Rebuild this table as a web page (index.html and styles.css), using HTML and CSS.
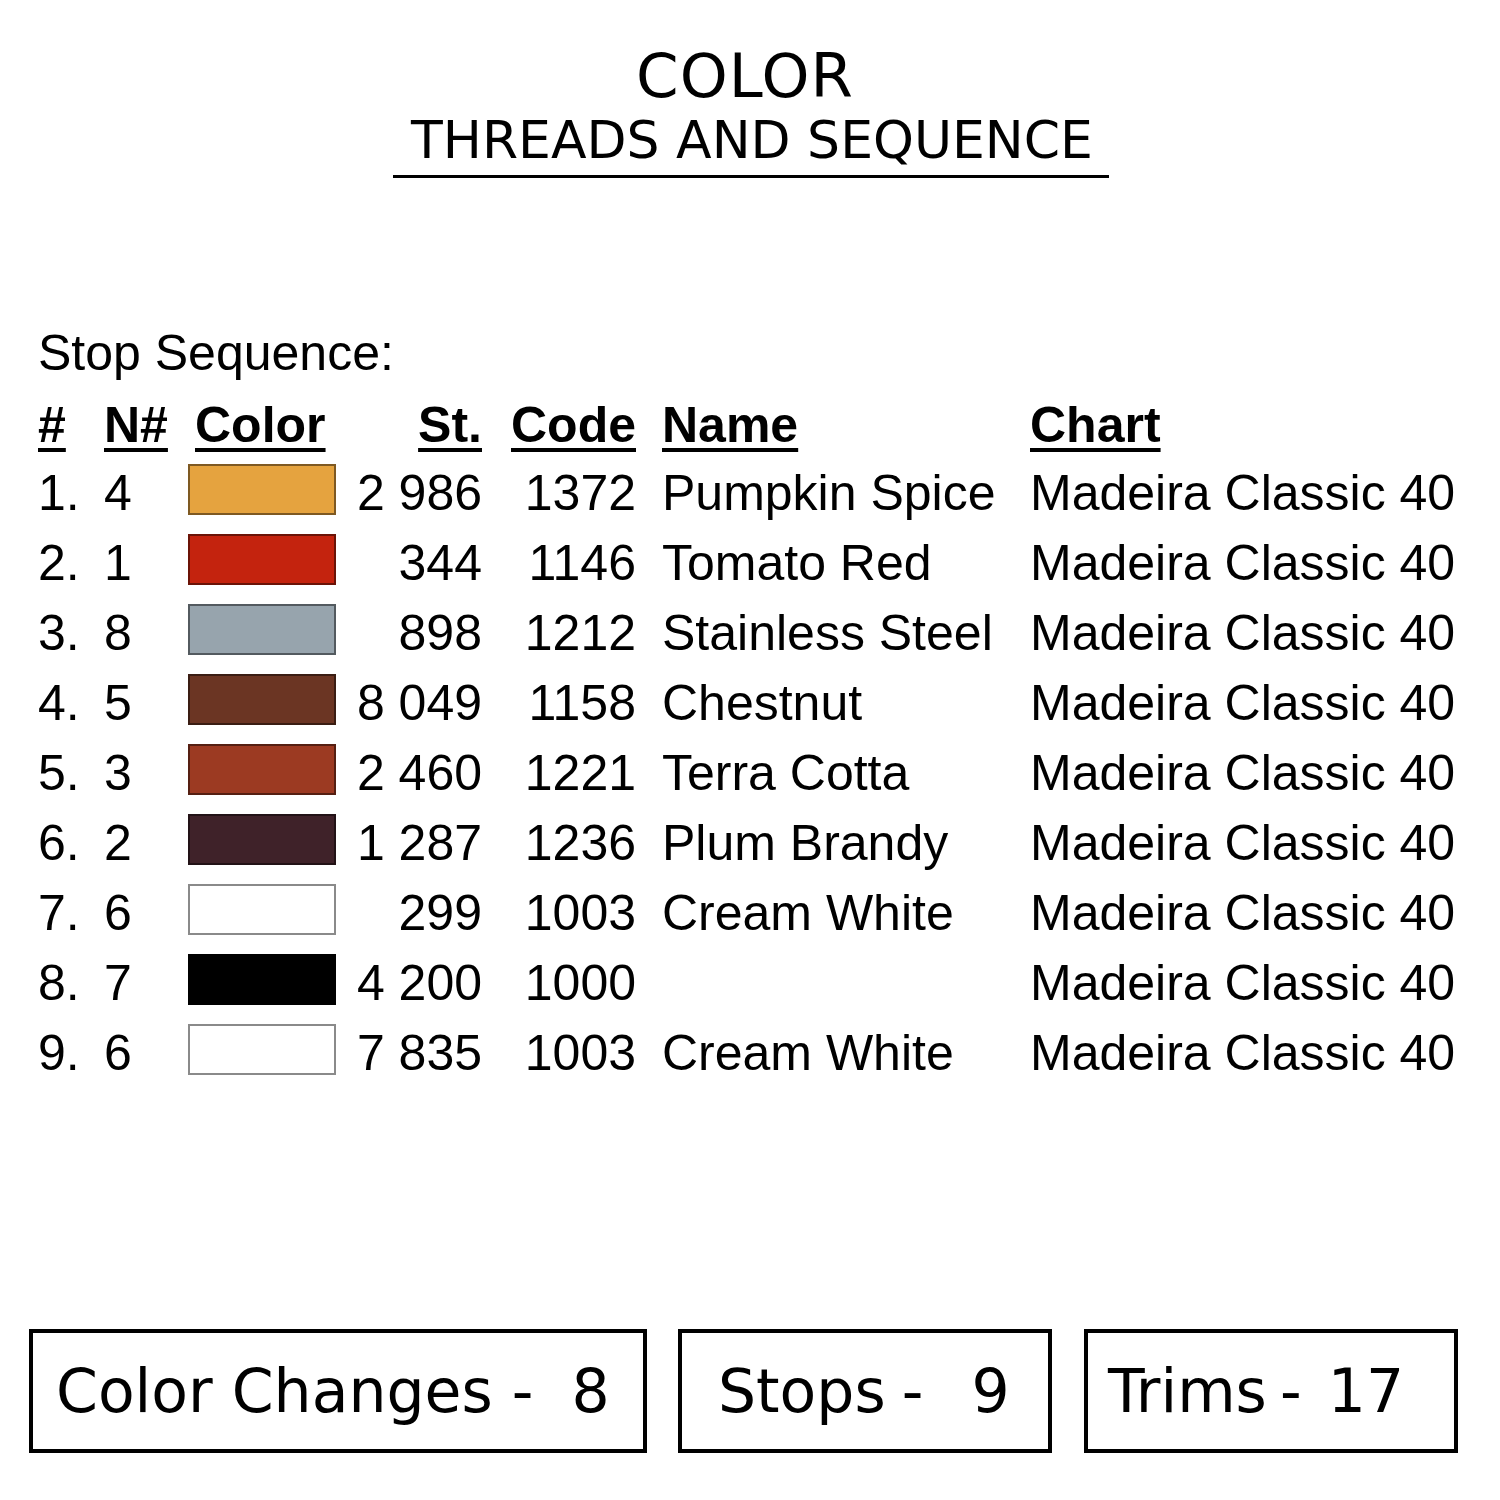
FILE: index.html
```html
<!DOCTYPE html>
<html>
<head>
<meta charset="utf-8">
<link rel="stylesheet" href="styles.css">
</head>
<body>
<div class="page">
  <header class="title">
    <div class="title-main">COLOR</div>
    <div class="title-sub">THREADS AND SEQUENCE</div>
  </header>

  <section class="seq">
    <div class="seq-label">Stop Sequence:</div>
    <div class="grid">
      <div class="h"><u>#</u></div>
      <div class="h"><u>N#</u></div>
      <div class="h h-color"><u>Color</u></div>
      <div class="h num"><u>St.</u></div>
      <div class="h num"><u>Code</u></div>
      <div class="h name"><u>Name</u></div>
      <div class="h"><u>Chart</u></div>

      <div>1.</div><div>4</div><div class="sw-cell"><span class="sw c1"></span></div><div class="num">2 986</div><div class="num">1372</div><div class="name">Pumpkin Spice</div><div>Madeira Classic 40</div>
      <div>2.</div><div>1</div><div class="sw-cell"><span class="sw c2"></span></div><div class="num">344</div><div class="num">1146</div><div class="name">Tomato Red</div><div>Madeira Classic 40</div>
      <div>3.</div><div>8</div><div class="sw-cell"><span class="sw c3"></span></div><div class="num">898</div><div class="num">1212</div><div class="name">Stainless Steel</div><div>Madeira Classic 40</div>
      <div>4.</div><div>5</div><div class="sw-cell"><span class="sw c4"></span></div><div class="num">8 049</div><div class="num">1158</div><div class="name">Chestnut</div><div>Madeira Classic 40</div>
      <div>5.</div><div>3</div><div class="sw-cell"><span class="sw c5"></span></div><div class="num">2 460</div><div class="num">1221</div><div class="name">Terra Cotta</div><div>Madeira Classic 40</div>
      <div>6.</div><div>2</div><div class="sw-cell"><span class="sw c6"></span></div><div class="num">1 287</div><div class="num">1236</div><div class="name">Plum Brandy</div><div>Madeira Classic 40</div>
      <div>7.</div><div>6</div><div class="sw-cell"><span class="sw c7"></span></div><div class="num">299</div><div class="num">1003</div><div class="name">Cream White</div><div>Madeira Classic 40</div>
      <div>8.</div><div>7</div><div class="sw-cell"><span class="sw c8"></span></div><div class="num">4 200</div><div class="num">1000</div><div class="name"></div><div>Madeira Classic 40</div>
      <div>9.</div><div>6</div><div class="sw-cell"><span class="sw c7"></span></div><div class="num">7 835</div><div class="num">1003</div><div class="name">Cream White</div><div>Madeira Classic 40</div>
    </div>
  </section>

  <footer class="stats">
    <div class="box b1">Color Changes -  8</div>
    <div class="box b2">Stops -   9</div>
    <div class="box b3">Trims -  17</div>
  </footer>
</div>
</body>
</html>
```

FILE: styles.css
```css
* { box-sizing: border-box; }
html, body { margin: 0; padding: 0; background: #fff; }
body { width: 1500px; height: 1500px; color: #000; }
.page { width: 1500px; height: 1500px; position: relative; }

.title {
  width: 716px;
  margin: 0 0 0 393px;
  padding-top: 42px;
  text-align: center;
  border-bottom: 3px solid #000;
  font-family: "DejaVu Sans", sans-serif;
  height: 178px;
}
.title-main {
  font-size: 61px;
  line-height: 68px;
  letter-spacing: 1px;
  padding-right: 12px;
}
.title-sub {
  font-size: 52px;
  line-height: 58px;
  margin-top: 1px;
  padding-left: 2px;
}

.seq {
  font-family: "Liberation Sans", Arial, sans-serif;
  font-size: 50px;
  padding-left: 38px;
  margin-top: 147px;
}
.seq-label { line-height: 56px; }
.grid {
  display: grid;
  grid-template-columns: 66px 82px 150px 146px 154px 394px auto;
  grid-template-rows: 67px;
  grid-auto-rows: 70px;
  margin-top: 10px;
  align-items: center;
  white-space: nowrap;
  line-height: 56px;
}
.grid > div { display: flex; align-items: center; }
.h { font-weight: bold; align-self: start; padding-top: 6px; }
.h u { text-decoration-thickness: 4px; text-underline-offset: 6px; }
.h-color { padding-left: 9px; }
.num { justify-content: flex-end; }
.name { padding-left: 26px; }
.sw-cell { justify-content: flex-start; padding-left: 2px; margin-bottom: 7px; }
.sw {
  display: block;
  width: 149px;
  height: 51px;
  border: 2px solid rgba(0,0,0,0.45);
}
.c1 { background: #e5a33f; }
.c2 { background: #c4230e; }
.c3 { background: #97a4ad; }
.c4 { background: #6b3523; }
.c5 { background: #9c3a22; }
.c6 { background: #3f2229; }
.c7 { background: #fff; border-color: #8a8a8a; }
.c8 { background: #000; }

.stats {
  position: absolute;
  left: 29px;
  top: 1329px;
  display: flex;
  font-family: "DejaVu Sans", sans-serif;
  font-size: 60px;
}
.box {
  height: 124px;
  border: 4px solid #000;
  display: flex;
  align-items: center;
  justify-content: flex-start;
  white-space: pre;
}
.b1 { width: 618px; padding-left: 23px; }
.b2 { width: 374px; margin-left: 31px; padding-left: 36px; word-spacing: -3px; }
.b3 { width: 374px; margin-left: 32px; padding-left: 20px; word-spacing: -6px; }
```
